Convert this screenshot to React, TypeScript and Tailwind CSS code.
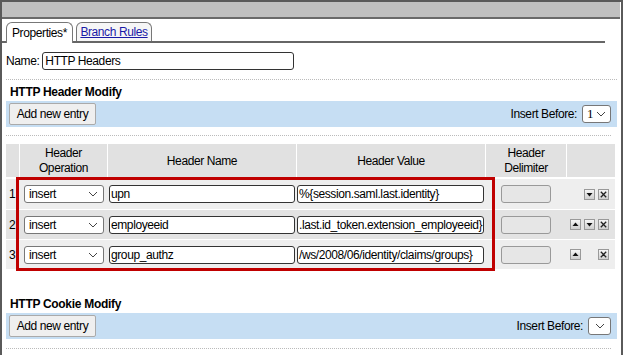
import React from "react";

const F = { fontFamily: '"Liberation Sans", Arial, sans-serif' };

function Chevron() {
  return (
    <svg width="10" height="6" viewBox="0 0 10 6" className="shrink-0">
      <path d="M1 1 L5 5 L9 1" fill="none" stroke="#444" strokeWidth="1" />
    </svg>
  );
}

function Select({ value }: { value: string }) {
  return (
    <div className="w-[80px] h-[18px] border border-[#777] rounded-[3px] bg-white flex items-center justify-between pl-[4px] pr-[5px] text-black">
      <span>{value}</span>
      <Chevron />
    </div>
  );
}

function TextBox({ value, w }: { value: string; w: string }) {
  return (
    <div className={`${w} h-[18px] border border-[#333] rounded-[3px] bg-white flex items-center px-[1px] text-black overflow-hidden whitespace-nowrap`}>
      <span>{value}</span>
    </div>
  );
}

function SmallBtn({ kind }: { kind: "up" | "down" | "x" }) {
  return (
    <div className="w-[11px] h-[11px] border border-[#999] bg-gradient-to-b from-[#f6f6f6] to-[#cfcfcf] flex items-center justify-center">
      <svg width="7" height="7" viewBox="0 0 7 7">
        {kind === "up" && <path d="M0.5 5 L6.5 5 L3.5 1.5 Z" fill="#111" />}
        {kind === "down" && <path d="M0.5 2 L6.5 2 L3.5 5.5 Z" fill="#111" />}
        {kind === "x" && <path d="M0.8 0.8 L6.2 6.2 M6.2 0.8 L0.8 6.2" stroke="#222" strokeWidth="1.3" />}
      </svg>
    </div>
  );
}

function AddBar({ sel }: { sel: string }) {
  return (
    <div className="ml-[4px] w-[611px] h-[26px] bg-[#c6def3] flex items-center justify-between pl-[3px] pr-[6px]">
      <div className="w-[87px] h-[22px] border border-[#aaa] rounded-[2px] bg-[#efefef] flex items-center justify-center text-black">
        Add new entry
      </div>
      <div className="flex items-center gap-[5px] text-black">
        <span>Insert Before:</span>
        {sel ? (
          <div className="w-[29px] h-[18px] border border-[#777] rounded-[3px] bg-white flex items-center justify-between pl-[4px] pr-[4px]">
            <span className="text-[13px]" style={{ fontFamily: '"Liberation Serif", serif' }}>{sel}</span>
            <Chevron />
          </div>
        ) : (
          <div className="w-[23px] h-[18px] border border-[#777] rounded-[3px] bg-white flex items-center justify-center">
            <Chevron />
          </div>
        )}
      </div>
    </div>
  );
}

const rows = [
  { n: "1", name: "upn", value: "%{session.saml.last.identity}", btns: ["", "down", "x"], bg: "bg-[#eeeeee]", h: "h-[30px]", mt: "mt-[2px]" },
  { n: "2", name: "employeeid", value: ".last.id_token.extension_employeeid}", btns: ["up", "down", "x"], bg: "bg-[#e3e3e3]", h: "h-[29px]", mt: "mt-[1px]" },
  { n: "3", name: "group_authz", value: "/ws/2008/06/identity/claims/groups}", btns: ["up", "", "x"], bg: "bg-[#eeeeee]", h: "h-[29px]", mt: "mt-[1px]" },
];

const COLS = "grid grid-cols-[13px_87px_188px_188px_80px_48px] gap-[1px]";

export default function App() {
  return (
    <div className="w-[624px] h-[355px] overflow-hidden bg-white text-black text-[12px] tracking-[-0.4px]" style={F}>
      <div className="w-[623px] h-[355px] border-l-2 border-r-2 border-t-2 border-[#5a5a5a] relative">
        <div className="h-[17px] bg-[#c0c0c0] border-b-2 border-[#6a6a6a] mr-[1px]" />
        {/* tabs */}
        <div className="mt-[3px] flex items-end h-[21px] border-b-2 border-[#666] w-[603px] pl-[4px] gap-[3px]">
          <div className="w-[67px] h-[21px] -mb-[2px] bg-white border border-b-0 border-[#777] rounded-t-[6px] flex items-center justify-center">
            Properties*
          </div>
          <div className="w-[76px] h-[19px] border border-b-0 border-[#777] rounded-t-[6px] flex items-center justify-center text-[#1a1aa6] underline bg-[#f6f6f6]">
            Branch Rules
          </div>
        </div>
        {/* name */}
        <div className="mt-[9px] flex items-center pl-[4px] gap-[3px]">
          <span>Name:</span>
          <div className="w-[252px] h-[18px] border border-[#333] rounded-[3px] flex items-center px-[2px]">HTTP Headers</div>
        </div>
        <div className="mt-[9px] ml-[4px] mr-[4px] border-t border-dotted border-[#bbb]" />
        <div className="mt-[3px] pl-[8px] h-[18px] font-bold flex items-center tracking-[-0.3px]">HTTP Header Modify</div>
        <AddBar sel="1" />
        <div className="mt-[8px] ml-[4px] mr-[10px] border-t border-dotted border-[#bbb]" />
        {/* table */}
        <div className="mt-[8px] ml-[4px] w-[609px]">
          <div className={`${COLS} h-[33px]`}>
            <div className="bg-[#e1e1e1]" />
            <div className="bg-[#e1e1e1] flex items-center justify-center text-center leading-[15px]">Header<br />Operation</div>
            <div className="bg-[#e1e1e1] flex items-center justify-center">Header Name</div>
            <div className="bg-[#e1e1e1] flex items-center justify-center">Header Value</div>
            <div className="bg-[#e1e1e1] flex items-center justify-center text-center leading-[15px]">Header<br />Delimiter</div>
            <div className="bg-[#e1e1e1]" />
          </div>
          {rows.map((r) => (
            <div key={r.n} className={`${r.mt} ${COLS} ${r.h} ${r.bg}`}>
              <div className="flex items-center pl-[3px]">{r.n}</div>
              <div className="flex items-center pl-[4px]"><Select value="insert" /></div>
              <div className="flex items-center pl-[1px]"><TextBox value={r.name} w="w-[186px]" /></div>
              <div className="flex items-center"><TextBox value={r.value} w="w-[187px]" /></div>
              <div className="flex items-center pl-[15px]">
                <div className="w-[50px] h-[18px] border border-[#999] rounded-[3px] bg-[#e6e6e6]" />
              </div>
              <div className="flex items-center justify-end pr-[6px] gap-[3px]">
                {r.btns.map((b, j) =>
                  b ? <SmallBtn key={j} kind={b as "up" | "down" | "x"} /> : <div key={j} className="w-[11px] h-[11px]" />
                )}
              </div>
            </div>
          ))}
        </div>
        {/* red annotation box */}
        <div className="absolute left-[14px] top-[175px] w-[479px] h-[94px] border-[3px] border-[#c00000]" />
        <div className="mt-[26px] pl-[8px] h-[18px] font-bold flex items-center tracking-[-0.3px]">HTTP Cookie Modify</div>
        <AddBar sel="" />
        <div className="mt-[9px] ml-[4px] mr-[10px] border-t border-dotted border-[#bbb]" />
      </div>
    </div>
  );
}
